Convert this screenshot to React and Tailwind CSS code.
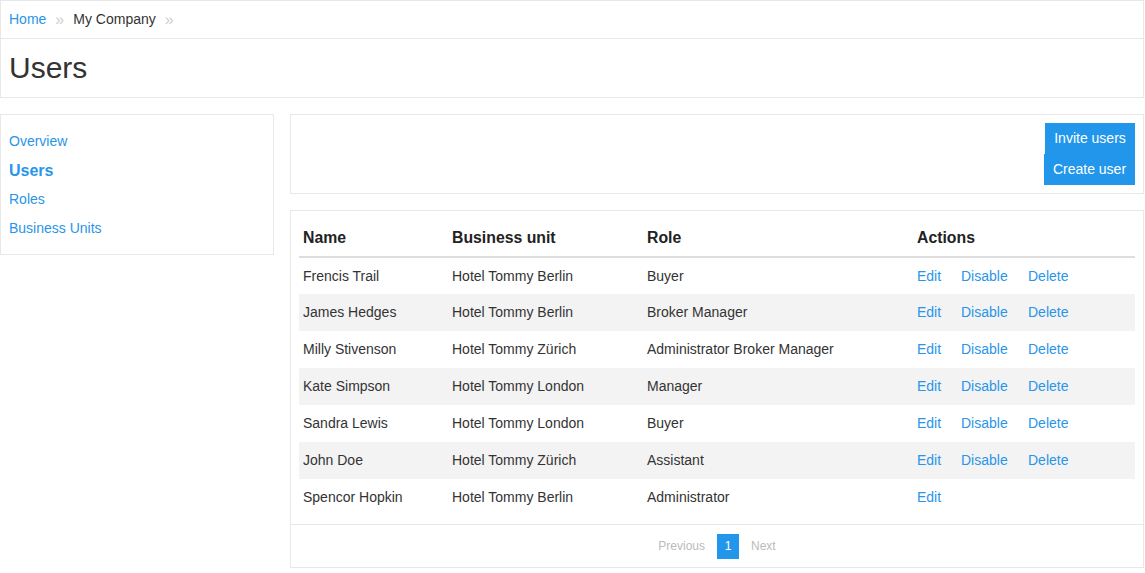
const rows = [
  ["Frencis Trail", "Hotel Tommy Berlin", "Buyer", true],
  ["James Hedges", "Hotel Tommy Berlin", "Broker Manager", true],
  ["Milly Stivenson", "Hotel Tommy Zürich", "Administrator Broker Manager", true],
  ["Kate Simpson", "Hotel Tommy London", "Manager", true],
  ["Sandra Lewis", "Hotel Tommy London", "Buyer", true],
  ["John Doe", "Hotel Tommy Zürich", "Assistant", true],
  ["Spencor Hopkin", "Hotel Tommy Berlin", "Administrator", false],
];

export default function App() {
  return (
    <div className="w-[1144px] bg-white text-[14px] text-[#333] font-['Liberation_Sans',Arial,sans-serif]">
      <div className="border border-[#e8e8e8]">
        <div className="h-[38px] flex items-center pl-[8px] border-b border-[#e8e8e8]">
          <span className="text-[#2a95e8]">Home</span>
          <span className="text-[#cfcfcf] ml-[9px] mr-[9px] text-[16px] leading-none">»</span>
          <span className="text-[#333]">My Company</span>
          <span className="text-[#cfcfcf] ml-[9px] text-[16px] leading-none">»</span>
        </div>
        <div className="h-[58px] flex items-center pl-[8px]">
          <h1 className="text-[30px] leading-none text-[#333]">Users</h1>
        </div>
      </div>
      <div className="flex gap-[16px] mt-[16px]">
        <div className="w-[274px] self-start border border-[#e8e8e8] pt-[12px] pb-[11px] pl-[8px] flex flex-col">
          <a className="text-[#2a95e8] h-[29px] leading-[29px]">Overview</a>
          <a className="text-[#2a95e8] font-bold text-[16px] h-[29px] leading-[29px]">Users</a>
          <a className="text-[#2a95e8] h-[29px] leading-[29px]">Roles</a>
          <a className="text-[#2a95e8] h-[29px] leading-[29px]">Business Units</a>
        </div>
        <div className="flex-1 flex flex-col gap-[16px]">
          <div className="border border-[#e8e8e8] h-[80px] p-[8px] flex flex-col items-end">
            <button className="bg-[#2196eb] text-white h-[31px] w-[90px] text-[14px]">Invite users</button>
            <button className="bg-[#2196eb] text-white h-[31px] w-[91px] text-[14px]">Create user</button>
          </div>
          <div className="border border-[#e8e8e8] h-[358px] flex flex-col">
            <div className="p-[8px] pb-[8px]">
              <table className="w-full border-collapse">
                <thead>
                  <tr className="h-[38px] border-b-2 border-[#ddd] text-left">
                    <th className="w-[149px] pl-[4px] pt-[1px] font-bold text-[15.8px] text-[#222]">Name</th>
                    <th className="w-[195px] pl-[4px] pt-[1px] font-bold text-[15.8px] text-[#222]">Business unit</th>
                    <th className="w-[270px] pl-[4px] pt-[1px] font-bold text-[15.8px] text-[#222]">Role</th>
                    <th className="pl-[4px] pt-[1px] font-bold text-[15.8px] text-[#222]">Actions</th>
                  </tr>
                </thead>
                <tbody>
                  {rows.map((r, i) => (
                    <tr key={i} className={"h-[37px] " + (i % 2 === 1 ? "bg-[#f3f3f3]" : "")}>
                      <td className="pl-[4px]">{r[0]}</td>
                      <td className="pl-[4px]">{r[1]}</td>
                      <td className="pl-[4px]">{r[2]}</td>
                      <td className="pl-[4px] text-[#2a95e8]">
                        <span className="inline-block w-[44px]">Edit</span>
                        {r[3] && <span className="inline-block w-[67px]">Disable</span>}
                        {r[3] && <span>Delete</span>}
                      </td>
                    </tr>
                  ))}
                </tbody>
              </table>
            </div>
            <div className="border-t border-[#e8e8e8] flex-1 flex items-center justify-center text-[12px]">
              <span className="text-[#bbb]">Previous</span>
              <span className="bg-[#2196eb] text-white w-[22px] h-[25px] flex items-center justify-center mx-[12px]">1</span>
              <span className="text-[#bbb]">Next</span>
            </div>
          </div>
        </div>
      </div>
    </div>
  );
}
